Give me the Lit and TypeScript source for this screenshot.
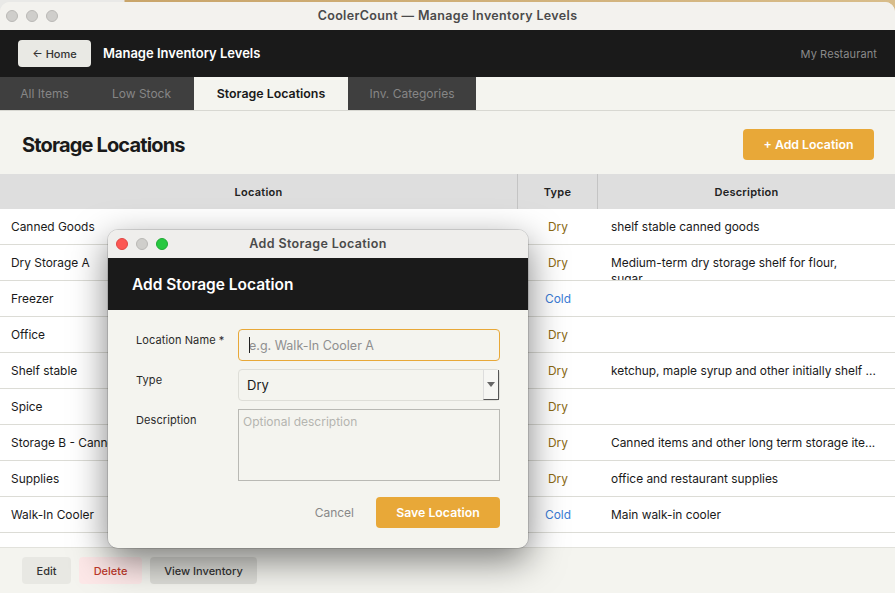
import { LitElement, html, css } from "lit";
import { customElement } from "lit/decorators.js";

const rows: [string, string, string][] = [
  ["Canned Goods", "Dry", "shelf stable canned goods"],
  ["Dry Storage A", "Dry", "Medium-term dry storage shelf for flour, sugar...."],
  ["Freezer", "Cold", ""],
  ["Office", "Dry", ""],
  ["Shelf stable", "Dry", "ketchup, maple syrup and other initially shelf ..."],
  ["Spice", "Dry", ""],
  ["Storage B - Canned and Long Term", "Dry", "Canned items and other long term storage ite..."],
  ["Supplies", "Dry", "office and restaurant supplies"],
  ["Walk-In Cooler", "Cold", "Main walk-in cooler"],
];

@customElement("app-root")
export class AppRoot extends LitElement {
  static styles = css`
    :host {
      display: block;
      width: 895px;
      height: 593px;
      overflow: hidden;
      position: relative;
      font-family: Inter, "Liberation Sans", sans-serif;
      background: linear-gradient(90deg, #e9e9e7 0, #e9e9e7 124px, #c9a56a 125px, #d8bd8a 100%);
      color: #1a1a1a;
      padding-top: 2px;
      box-sizing: border-box;
    }
    * { box-sizing: border-box; }
    .window {
      height: 591px;
      background: #f4f4ef;
      border-radius: 10px 10px 0 0;
      overflow: hidden;
      display: flex;
      flex-direction: column;
    }
    .titlebar {
      height: 28px;
      flex: none;
      background: #f3f2ee;
      display: flex;
      align-items: center;
      justify-content: center;
      position: relative;
      font-size: 12.5px;
      font-weight: 600;
      color: #4a4a4a;
      letter-spacing: 0.35px;
      padding-bottom: 2px;
    }
    .lights {
      position: absolute;
      left: 6px;
      top: 8px;
      display: flex;
      gap: 8px;
    }
    .light {
      width: 12px;
      height: 12px;
      border-radius: 50%;
      background: #cfcecb;
      border: 1px solid #b9b8b5;
    }
    .header {
      height: 47px;
      flex: none;
      background: #1a1a1a;
      display: flex;
      align-items: center;
      padding: 0 18px;
      color: #fff;
    }
    .home {
      width: 73px;
      height: 27px;
      border-radius: 4px;
      background: #e9e9e4;
      color: #333;
      font-size: 11px;
      font-weight: 500;
      display: flex;
      align-items: center;
      justify-content: center;
      gap: 3px;
      margin-right: 12px;
    }
    .header-title { font-size: 13px; font-weight: 600; flex: 1; padding-bottom: 1px; }
    .restaurant { font-size: 11px; color: #8a8a8a; letter-spacing: 0.1px; }
    .tabs {
      height: 34px;
      flex: none;
      display: flex;
      border-bottom: 1px solid #d8d8d2;
    }
    .tab {
      height: 33px;
      display: flex;
      align-items: center;
      justify-content: center;
      background: #3f3f3f;
      color: #868686;
      font-size: 12px;
      font-weight: 400;
    }
    .tab.active { background: #f4f4ef; color: #1a1a1a; font-weight: 600; font-size: 12.4px; }
    .page-head {
      height: 63px;
      flex: none;
      display: flex;
      align-items: center;
      justify-content: space-between;
      padding: 4px 21px 0 22px;
    }
    h1 {
      margin: 0;
      font-size: 20px;
      font-weight: 700;
      letter-spacing: -0.85px;
      color: #1a1a1a;
    }
    .amber {
      background: #e8a838;
      color: #fff;
      font-weight: 600;
      font-size: 12.3px;
      border-radius: 4px;
      display: flex;
      align-items: center;
      justify-content: center;
    }
    .add { width: 131px; height: 31px; }
    .table { flex: 1; background: #fff; display: flex; flex-direction: column; }
    .thead, .row {
      display: grid;
      grid-template-columns: 518px 80px 1fr;
    }
    .thead {
      height: 35px;
      background: #dedede;
      font-size: 11px;
      font-weight: 600;
      letter-spacing: 0.25px;
      color: #222;
    }
    .thead > div {
      display: flex;
      align-items: center;
      justify-content: center;
      border-right: 1px solid #c4c4c4;
    }
    .thead > div:last-child { border-right: 0; }
    .row {
      height: 36px;
      border-bottom: 1px solid #dcdcd6;
      font-size: 11.9px;
      color: #1a1a1a;
      align-items: center;
      overflow: hidden;
    }
    .loc { padding-left: 11px; white-space: nowrap; }
    .type { text-align: center; }
    .Dry { color: #8b6914; }
    .Cold { color: #3a7bd5; }
    .desc {
      align-self: start;
      padding: 10px 14px 0 13px;
      line-height: 15.5px;
      height: 35px;
      overflow: hidden;
    }
    .footer {
      height: 46px;
      flex: none;
      background: #f4f4ef;
      border-top: 1px solid #e2e2dc;
      display: flex;
      align-items: center;
      gap: 8px;
      padding: 0 22px;
      margin-top: auto;
    }
    .fbtn {
      height: 27px;
      border-radius: 4px;
      font-size: 11px;
      font-weight: 500;
      display: flex;
      align-items: center;
      justify-content: center;
      background: #e8e8e3;
      color: #333;
    }
    .edit { width: 49px; }
    .delete { width: 63px; background: #fde8e8; color: #c0392b; }
    .view { width: 107px; background: #ddddd8; }
    .spacer { flex: 1; background: #fff; }

    .modal {
      position: absolute;
      left: 108px;
      top: 230px;
      width: 420px;
      height: 318px;
      border-radius: 10px;
      background: #f4f4ef;
      overflow: hidden;
      display: flex;
      flex-direction: column;
      outline: 1px solid rgba(0, 0, 0, 0.12);
    }
    .shadow {
      position: absolute;
      left: 108px;
      top: 230px;
      width: 420px;
      height: 318px;
      border-radius: 10px;
      box-shadow: 0 12px 36px rgba(0, 0, 0, 0.5);
    }
    .m-title {
      height: 28px;
      flex: none;
      background: #efeeec;
      display: flex;
      align-items: center;
      justify-content: center;
      position: relative;
      font-size: 12.5px;
      font-weight: 600;
      color: #4a4a4a;
      letter-spacing: 0.35px;
      padding-bottom: 2px;
    }
    .m-lights { position: absolute; left: 8px; top: 8px; display: flex; gap: 8px; }
    .red { background: #fc5753; border-color: #df4744; }
    .green { background: #27c840; border-color: #1fa934; }
    .m-head {
      height: 52px;
      flex: none;
      background: #1a1a1a;
      color: #fff;
      display: flex;
      align-items: center;
      padding-left: 24px;
      font-size: 15.5px;
      font-weight: 600;
    }
    .form {
      flex: 1;
      padding: 19px 28px 20px;
      display: flex;
      flex-direction: column;
    }
    .field {
      display: grid;
      grid-template-columns: 102px 262px;
      margin-bottom: 8px;
    }
    .field label {
      font-size: 11px;
      font-weight: 400;
      letter-spacing: 0.1px;
      color: #2a2a2a;
      padding-top: 4px;
    }
    .input-wrap { position: relative; height: 32px; }
    input {
      width: 262px;
      height: 32px;
      border: 1px solid #e8a838;
      border-radius: 4px;
      background: #f4f4ef;
      font: 400 12.5px Inter, "Liberation Sans", sans-serif;
      padding: 0 10px;
      outline: none;
    }
    input::placeholder { color: #8f8f8f; opacity: 1; }
    .caret {
      position: absolute;
      left: 11px;
      top: 8px;
      width: 1px;
      height: 16px;
      background: #222;
    }
    .select {
      height: 32px;
      position: relative;
      border: 1px solid #deded8;
      border-radius: 4px;
      font-size: 13px;
      display: flex;
      align-items: center;
      padding-left: 8px;
      color: #1a1a1a;
    }
    .arrow {
      position: absolute;
      right: 0;
      top: 0;
      width: 16px;
      height: 30px;
      background: #f6f6f3;
      border-right: 1.5px solid #555;
      border-bottom: 1.5px solid #555;
      border-left: 1px solid #ddd;
      display: flex;
      align-items: center;
      justify-content: center;
    }
    textarea {
      display: block;
      width: 262px;
      height: 72px;
      border: 1px solid #b9b9b4;
      background: #f4f4ef;
      border-radius: 0;
      padding: 4px;
      font: 400 12px Inter, "Liberation Sans", sans-serif;
      resize: none;
      outline: none;
    }
    textarea::placeholder { color: #b5b5b0; opacity: 1; }
    .actions {
      display: flex;
      justify-content: flex-end;
      align-items: center;
      margin-top: 8px;
      gap: 22px;
    }
    .cancel { font-size: 12px; color: #888; }
    .save { width: 124px; height: 31px; }
  `;

  render() {
    return html`
      <div class="window">
        <div class="titlebar">
          <div class="lights"><span class="light"></span><span class="light"></span><span class="light"></span></div>
          CoolerCount — Manage Inventory Levels
        </div>
        <div class="header">
          <div class="home">← Home</div>
          <div class="header-title">Manage Inventory Levels</div>
          <div class="restaurant">My Restaurant</div>
        </div>
        <div class="tabs">
          <div class="tab" style="width:89px">All Items</div>
          <div class="tab" style="width:105px">Low Stock</div>
          <div class="tab active" style="width:154px">Storage Locations</div>
          <div class="tab" style="width:128px">Inv. Categories</div>
        </div>
        <div class="page-head">
          <h1>Storage Locations</h1>
          <div class="amber add">+ Add Location</div>
        </div>
        <div class="table">
          <div class="thead"><div>Location</div><div>Type</div><div>Description</div></div>
          ${rows.map(
            (r) => html`<div class="row">
              <div class="loc">${r[0]}</div>
              <div class="type ${r[1]}">${r[1]}</div>
              <div class="desc">${r[2]}</div>
            </div>`
          )}
          <div class="spacer"></div>
        </div>
        <div class="footer">
          <div class="fbtn edit">Edit</div>
          <div class="fbtn delete">Delete</div>
          <div class="fbtn view">View Inventory</div>
        </div>
      </div>
      <div class="shadow"></div>
      <div class="modal">
        <div class="m-title">
          <div class="m-lights"><span class="light red"></span><span class="light"></span><span class="light green"></span></div>
          Add Storage Location
        </div>
        <div class="m-head">Add Storage Location</div>
        <div class="form">
          <div class="field">
            <label>Location Name *</label>
            <div class="input-wrap"><input placeholder="e.g. Walk-In Cooler A" /><span class="caret"></span></div>
          </div>
          <div class="field">
            <label>Type</label>
            <div class="select">Dry
              <span class="arrow"><svg width="8" height="5" viewBox="0 0 8 5"><path d="M0 0h8L4 5z" fill="#666"/></svg></span>
            </div>
          </div>
          <div class="field">
            <label>Description</label>
            <textarea placeholder="Optional description"></textarea>
          </div>
          <div class="actions">
            <div class="cancel">Cancel</div>
            <div class="amber save">Save Location</div>
          </div>
        </div>
      </div>
    `;
  }
}
